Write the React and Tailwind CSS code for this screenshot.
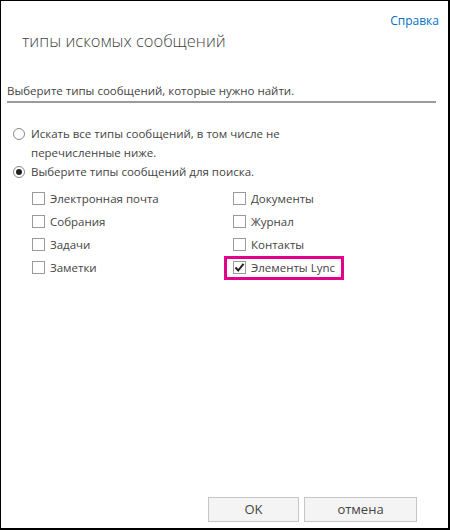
import { useState } from "react";

const left = ["Электронная почта", "Собрания", "Задачи", "Заметки"];
const right = ["Документы", "Журнал", "Контакты", "Элементы Lync"];

function Box({ checked }) {
  return (
    <span className="flex h-[13px] w-[13px] shrink-0 items-center justify-center border border-[#9a9a9a] bg-white">
      {checked && (
        <svg width="11" height="11" viewBox="0 0 11 11">
          <path d="M1.5 5.5 L4.2 8.5 L9.5 1.8" fill="none" stroke="#222" strokeWidth="2" />
        </svg>
      )}
    </span>
  );
}

function Radio({ on }) {
  return (
    <span className="flex h-[12px] w-[12px] shrink-0 items-center justify-center rounded-full border border-[#888] bg-white">
      {on && <span className="h-[6px] w-[6px] rounded-full bg-[#222]" />}
    </span>
  );
}

export default function App() {
  const [mode] = useState("pick");
  return (
    <div
      className="flex h-[530px] w-[450px] flex-col border-t border-l border-r-2 border-b-2 border-black bg-white text-[11.5px] text-[#444]"
      style={{ fontFamily: '"Open Sans", "Noto Sans", sans-serif' }}
    >
      {/* шапка */}
      <div className="flex justify-end pt-[12px] pr-[9px]">
        <a className="text-[12px] leading-[16px] text-[#0072c6]">Справка</a>
      </div>
      <h1 className="pl-[21px] text-[16.5px] leading-[24px] font-light text-[#444]">
        типы искомых сообщений
      </h1>

      <div className="mt-[29px] mx-[6px] w-[429px] border-b-2 border-[#9b9b9b] pb-[2px] leading-[17px]">
        Выберите типы сообщений, которые нужно найти.
      </div>

      {/* варианты */}
      <div className="mt-[21px] pl-[12px] leading-[19px]">
        <div className="flex gap-[6px]">
          <span className="pt-[4px]"><Radio on={mode === "all"} /></span>
          <span>
            Искать все типы сообщений, в том числе не
            <br />
            перечисленные ниже.
          </span>
        </div>
        <div className="flex items-center gap-[6px]">
          <Radio on={mode === "pick"} />
          <span>Выберите типы сообщений для поиска.</span>
        </div>
      </div>

      <div className="mt-[8px] grid grid-cols-[201px_1fr] pl-[31px] leading-[19px]">
        <div className="flex flex-col gap-[4px]">
          {left.map((t) => (
            <div key={t} className="flex items-center gap-[5px]">
              <Box />
              <span>{t}</span>
            </div>
          ))}
        </div>
        <div className="flex flex-col gap-[4px]">
          {right.map((t, i) => (
            <div key={t} className="flex h-[19px] items-center gap-[5px]">
              {i === 3 ? (
                <div className="-ml-[9px] flex h-[24px] w-[120px] shrink-0 items-center gap-[5px] border-[3px] border-[#e5008a] pl-[6px]">
                  <Box checked />
                  <span>{t}</span>
                </div>
              ) : (
                <>
                  <Box />
                  <span>{t}</span>
                </>
              )}
            </div>
          ))}
        </div>
      </div>

      {/* кнопки */}
      <div className="mt-auto mb-[6px] flex justify-end gap-[5px] pr-[31px]">
        <button className="h-[25px] w-[91px] border border-[#c6c6c6] bg-[#f4f4f4] text-[13px] text-[#444]">
          OK
        </button>
        <button className="h-[25px] w-[113px] border border-[#c6c6c6] bg-[#f4f4f4] text-[13px] text-[#444]">
          отмена
        </button>
      </div>
    </div>
  );
}
